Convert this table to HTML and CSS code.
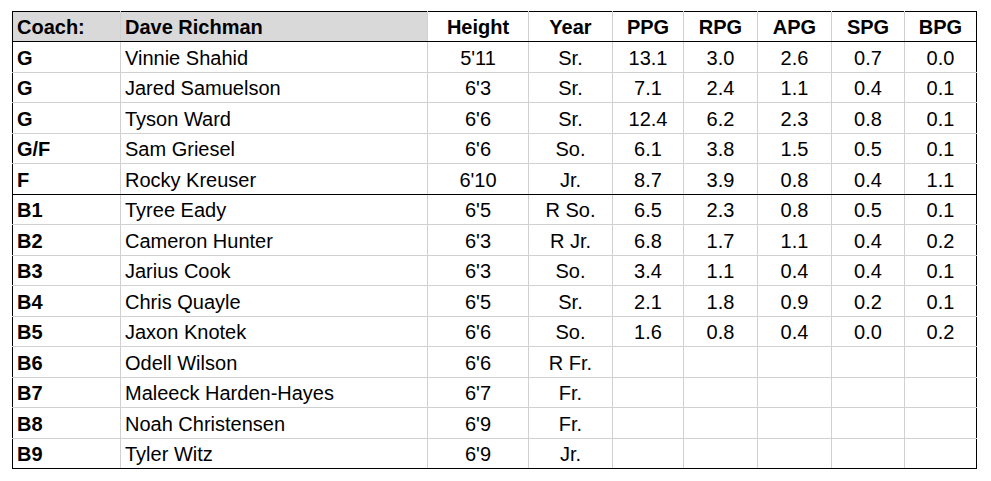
FILE: index.html
```html
<!DOCTYPE html>
<html>
<head>
<meta charset="utf-8">
<link rel="stylesheet" href="styles.css">
</head>
<body>
<table class="roster">
  <colgroup>
    <col class="c-pos"><col class="c-name"><col class="c-ht"><col class="c-yr">
    <col class="c-ppg"><col class="c-rpg"><col class="c-apg"><col class="c-spg"><col class="c-bpg">
  </colgroup>
  <thead>
    <tr>
      <th class="l shade">Coach:</th>
      <th class="l shade">Dave Richman</th>
      <th>Height</th><th>Year</th><th>PPG</th><th>RPG</th><th>APG</th><th>SPG</th><th>BPG</th>
    </tr>
  </thead>
  <tbody>
    <tr class="a"><td class="pos">G</td><td class="name">Vinnie Shahid</td><td>5'11</td><td>Sr.</td><td>13.1</td><td>3.0</td><td>2.6</td><td>0.7</td><td>0.0</td></tr>
    <tr class="b"><td class="pos">G</td><td class="name">Jared Samuelson</td><td>6'3</td><td>Sr.</td><td>7.1</td><td>2.4</td><td>1.1</td><td>0.4</td><td>0.1</td></tr>
    <tr class="a"><td class="pos">G</td><td class="name">Tyson Ward</td><td>6'6</td><td>Sr.</td><td>12.4</td><td>6.2</td><td>2.3</td><td>0.8</td><td>0.1</td></tr>
    <tr class="b"><td class="pos">G/F</td><td class="name">Sam Griesel</td><td>6'6</td><td>So.</td><td>6.1</td><td>3.8</td><td>1.5</td><td>0.5</td><td>0.1</td></tr>
    <tr class="a starters-end"><td class="pos">F</td><td class="name">Rocky Kreuser</td><td>6'10</td><td>Jr.</td><td>8.7</td><td>3.9</td><td>0.8</td><td>0.4</td><td>1.1</td></tr>
    <tr class="b"><td class="pos">B1</td><td class="name">Tyree Eady</td><td>6'5</td><td>R So.</td><td>6.5</td><td>2.3</td><td>0.8</td><td>0.5</td><td>0.1</td></tr>
    <tr class="a"><td class="pos">B2</td><td class="name">Cameron Hunter</td><td>6'3</td><td>R Jr.</td><td>6.8</td><td>1.7</td><td>1.1</td><td>0.4</td><td>0.2</td></tr>
    <tr class="b"><td class="pos">B3</td><td class="name">Jarius Cook</td><td>6'3</td><td>So.</td><td>3.4</td><td>1.1</td><td>0.4</td><td>0.4</td><td>0.1</td></tr>
    <tr class="a"><td class="pos">B4</td><td class="name">Chris Quayle</td><td>6'5</td><td>Sr.</td><td>2.1</td><td>1.8</td><td>0.9</td><td>0.2</td><td>0.1</td></tr>
    <tr class="b"><td class="pos">B5</td><td class="name">Jaxon Knotek</td><td>6'6</td><td>So.</td><td>1.6</td><td>0.8</td><td>0.4</td><td>0.0</td><td>0.2</td></tr>
    <tr class="a"><td class="pos">B6</td><td class="name">Odell Wilson</td><td>6'6</td><td>R Fr.</td><td></td><td></td><td></td><td></td><td></td></tr>
    <tr class="b"><td class="pos">B7</td><td class="name">Maleeck Harden-Hayes</td><td>6'7</td><td>Fr.</td><td></td><td></td><td></td><td></td><td></td></tr>
    <tr class="a"><td class="pos">B8</td><td class="name">Noah Christensen</td><td>6'9</td><td>Fr.</td><td></td><td></td><td></td><td></td><td></td></tr>
    <tr class="b"><td class="pos">B9</td><td class="name">Tyler Witz</td><td>6'9</td><td>Jr.</td><td></td><td></td><td></td><td></td><td></td></tr>
  </tbody>
</table>
</body>
</html>
```

FILE: styles.css
```css
html, body {
  margin: 0;
  background: #ffffff;
}
body {
  padding: 11px 0 0 12px;
  font-family: "Liberation Sans", Arial, sans-serif;
  color: #000;
}
.roster {
  border-collapse: collapse;
  table-layout: fixed;
  width: 964px;
  border: 1px solid #000;
  font-size: 20px;
}
.c-pos { width: 108px; }
.c-name { width: 307px; }
.c-ht { width: 101px; }
.c-yr { width: 84px; }
.c-ppg { width: 71px; }
.c-rpg { width: 74px; }
.c-apg { width: 74px; }
.c-spg { width: 73px; }
.c-bpg { width: 72px; }

.roster th,
.roster td {
  border: 1px solid #d0d0d0;
  padding: 0 4px 2px 4px;
  vertical-align: bottom;
  text-align: center;
  line-height: 23px;
  white-space: nowrap;
  overflow: hidden;
}
.roster thead tr { height: 30px; }
.roster thead th {
  font-weight: bold;
  border-bottom: 1px solid #000;
  border-top: 1px solid #000;
}
.roster th.l { text-align: left; }
.roster th.shade { background: #d9d9d9; }
.roster tr.a { height: 31px; }
.roster tr.b { height: 30px; }
.roster td.pos {
  text-align: left;
  font-weight: bold;
}
.roster td.name { text-align: left; }
.roster tr.starters-end td { border-bottom: 1px solid #000; }
.roster tr > :first-child { border-left: 1px solid #000; }
.roster tr > :last-child { border-right: 1px solid #000; }
.roster tbody tr:last-child td { border-bottom: 1px solid #000; }
```
